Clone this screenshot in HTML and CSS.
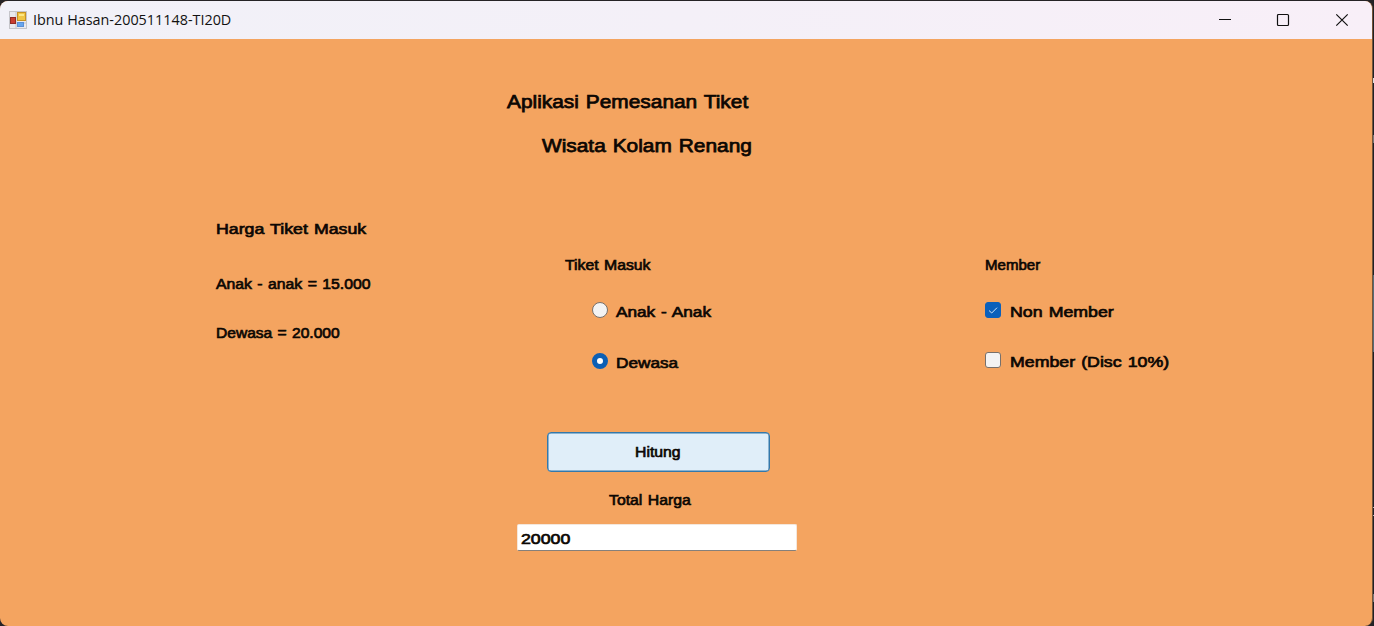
FILE: index.html
```html
<!DOCTYPE html>
<html lang="id">
<head>
<meta charset="utf-8">
<title>Ibnu Hasan-200511148-TI20D</title>
<link rel="stylesheet" href="styles.css">
</head>
<body>
<div class="desktop">
  <div class="window">
    <header class="titlebar">
      <svg class="app-icon" width="18" height="18" viewBox="0 0 18 18">
        <rect x=".5" y=".5" width="17" height="17" fill="#e9e9ee" stroke="#c5c5ca"/>
        <path d="M7 1v16M1 12h16" stroke="#c5c5ca"/>
        <rect x="1.500" y="6.500" width="5" height="6" fill="#c93d30" stroke="#922b25"/>
        <rect x="8.500" y="1.500" width="8" height="8" fill="#f0c545" stroke="#c79323"/>
        <path d="M10 3h5v2h-5z" fill="#fce785"/>
        <rect x="8.500" y="11.500" width="6" height="4" fill="#68a6ee" stroke="#5b8fd6"/>
      </svg>
      <span class="caption">Ibnu Hasan-200511148-TI20D</span>
      <div class="controls">
        <svg width="12" height="12" viewBox="0 0 12 12"><path d="M1 5.500h12"/></svg>
        <svg width="12" height="12" viewBox="0 0 12 12"><rect x=".5" y=".5" width="11" height="11" rx="1"/></svg>
        <svg width="12" height="12" viewBox="0 0 12 12"><path d="M.3.3l11.400 11.400M11.700.3L.3 11.700"/></svg>
      </div>
    </header>
    <main class="form">
      <div class="heading">
        <h1 class="title">Aplikasi Pemesanan Tiket</h1>
        <h1 class="title title-second">Wisata Kolam Renang</h1>
      </div>
      <div class="columns">
        <section class="prices">
          <h2 class="text wide-x">Harga Tiket Masuk</h2>
          <p class="text price-child">Anak - anak = 15.000</p>
          <p class="text price-adult">Dewasa = 20.000</p>
        </section>
        <section class="tickets">
          <h2 class="text">Tiket Masuk</h2>
          <div class="option"><span class="radio"></span><span class="text wide">Anak - Anak</span></div>
          <div class="option"><span class="radio selected"></span><span class="text wide">Dewasa</span></div>
        </section>
        <section class="members">
          <h2 class="text narrow">Member</h2>
          <div class="option"><span class="check checked"><svg width="16" height="16" viewBox="0 0 16 16"><path d="M4 8.500l2.700 2.500L12 5.700"/></svg></span><span class="text wide-x">Non Member</span></div>
          <div class="option"><span class="check"></span><span class="text wide-x">Member (Disc 10%)</span></div>
        </section>
      </div>
      <div class="result">
        <button class="calculate"><span class="text">Hitung</span></button>
        <div class="text total-label">Total Harga</div>
        <div class="total"><span class="text wide-x">20000</span></div>
      </div>
    </main>
  </div>
  <aside class="edge">
    <i class="dot"></i><i class="mark"></i><i class="panel"></i><i class="line"></i><i class="line line-next"></i><i class="mark mark-low"></i>
  </aside>
</div>
</body>
</html>
```
FILE: styles.css
```css
* { box-sizing: border-box; }
body { margin: 0; background: #252326; }
h1, h2, p { margin: 0; font-weight: 400; }
.desktop { display: flex; width: 1374px; height: 626px; overflow: hidden; background: #252326; }
.window {
  width: 1373px;
  height: 625px;
  margin-top: 1px;
  border-radius: 8px;
  overflow: hidden;
  background: #f4a460;
  border-right: 1px solid #755438;
}
.titlebar {
  display: flex;
  align-items: center;
  height: 38px;
  padding: 0 24px 0 9px;
  background: linear-gradient(90deg, #f1f1f8, #f4f0f8 50%, #f8eff8);
}
.caption {
  margin-left: 6px;
  font: 14px/20px "Open Sans", sans-serif;
  color: #111;
  white-space: nowrap;
  transform: scaleX(1.026);
  transform-origin: left;
}
.controls { display: flex; gap: 47px; margin-left: auto; }
.controls svg { fill: none; stroke: #111; stroke-width: 1.2; overflow: visible; }
.form { height: 586px; padding-top: 51px; font-family: "Liberation Sans", Arial, sans-serif; color: #0c0703; }
.heading { padding-left: 507px; }
.title {
  width: max-content;
  font-size: 18.5px;
  line-height: 22px;
  -webkit-text-stroke: .75px;
  word-spacing: 1px;
  transform: translateY(.5px) scaleX(1.128);
  transform-origin: left;
}
.title-second { margin: 22px 0 0 35px; }
.text {
  width: max-content;
  font-size: 15.5px;
  line-height: 20px;
  -webkit-text-stroke: .7px;
  white-space: nowrap;
  word-spacing: 1px;
  transform: scaleX(1.018);
  transform-origin: left;
}
.wide { transform: scaleX(1.11); }
.wide-x { transform: scaleX(1.145); }
.narrow { transform: scaleX(.97); }
.columns { display: grid; grid-template-columns: 349px 420px 1fr; height: 213px; padding: 63px 0 0 216px; }
.price-child { margin-top: 35px; }
.price-adult { margin-top: 29px; transform: scaleX(1.005); }
.tickets, .members { padding-top: 36px; }
.option { display: flex; align-items: center; height: 20px; margin-top: 26px; }
.option .text { padding-top: 2px; }
.option + .option { margin-top: 31px; }
.members .option + .option { margin-top: 30px; }
.tickets .option { padding-left: 27px; }
.radio, .check {
  width: 16px;
  height: 16px;
  margin: -2px 8px 0 0;
  background: #f3f3f3;
  border: 1px solid #77706b;
}
.radio { border-radius: 50%; }
.radio.selected { background: #fff; border: 5px solid #0b5fb5; }
.check { margin-right: 9px; border-radius: 3px; }
.checked { background: #0b60bb; border-color: #0b60bb; }
.checked svg { display: block; margin: -1px; fill: none; stroke: #d3e6f8; }
.result { width: 281px; margin: 63px 0 0 516px; }
.calculate {
  display: flex;
  align-items: center;
  justify-content: center;
  width: 223px;
  height: 40px;
  margin: 0 0 0 31px;
  padding: 0 3px 0 0;
  background: #e0eef9;
  border: 1px solid #3578aa;
  box-shadow: inset 0 0 0 .5px #3578aa;
  border-radius: 4px;
  font-family: inherit;
  color: #0c0703;
}
.total-label { margin: 18px 0 0 93px; }
.total {
  display: flex;
  align-items: center;
  height: 27px;
  margin: 14px 0 0 1px;
  padding: 2px 0 0 3px;
  background: #fff;
  border: 1px solid #f4e7dc;
  border-bottom-color: #85807b;
  border-radius: 2px;
}
.edge { display: flex; flex-direction: column; width: 1px; background: #202124; }
.edge i { flex: none; width: 1px; }
.dot { height: 5px; margin-top: 78px; background: #ddd; }
.mark { height: 8px; margin-top: 52px; background: #777; }
.panel { height: 77px; margin-top: 132px; background: #566b76; }
.line { height: 1px; margin-top: 155px; background: #bbb; }
.line-next { margin-top: 7px; }
.mark-low { margin-top: 78px; }
```
